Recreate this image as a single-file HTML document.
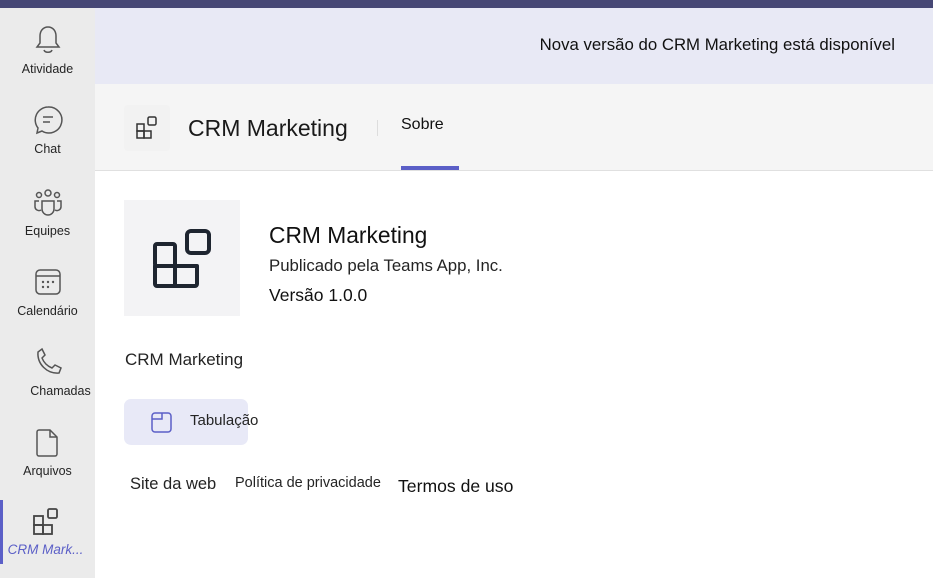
<!DOCTYPE html>
<html><head><meta charset="utf-8"><style>
*{margin:0;padding:0;box-sizing:border-box}
body{width:933px;height:578px;overflow:hidden;background:#fff;font-family:"Liberation Sans",sans-serif;color:#242424;position:relative}
.top{position:absolute;left:0;top:0;width:933px;height:8px;background:#464775}
.side{position:absolute;left:0;top:8px;width:95px;height:570px;background:#ebebeb}
.it{position:absolute;left:0;width:95px;text-align:center;font-size:12.5px;color:#242424}
.it svg{display:block;margin:0 auto 4px}
.banner{position:absolute;left:95px;top:8px;width:838px;height:76px;background:#e8e9f5}
.banner span{position:absolute;right:38px;top:27px;font-size:16.8px;color:#111}
.hdr{position:absolute;left:95px;top:84px;width:838px;height:87px;background:#f5f5f5;border-bottom:1px solid #e0e0e0}
.a{position:absolute;font-size:16px;white-space:nowrap}
</style></head><body>
<div class="top"></div>
<div class="side">
 <div class="it" style="top:16px"><svg width="28" height="34" viewBox="0 0 28 34" fill="none" stroke="#555" stroke-width="1.5"><path d="M14 3c-5 0-8 4-8 9v7l-3 4h22l-3-4v-7c0-5-3-9-8-9z"/><path d="M10 26c1 3 7 3 8 0"/></svg>Atividade</div>
 <div class="it" style="top:96px"><svg width="30" height="34" viewBox="0 0 30 34" fill="none" stroke="#555" stroke-width="1.5"><path d="M15 3a13 13 0 1 1-6 24l-5 2 1-5A13 13 0 0 1 15 3z"/><path d="M10 13h10M10 18h7"/></svg>Chat</div>
 <div class="it" style="top:178px"><svg width="32" height="34" viewBox="0 0 32 34" fill="none" stroke="#555" stroke-width="1.5"><circle cx="16" cy="7" r="3"/><circle cx="7" cy="9" r="2.5"/><circle cx="25" cy="9" r="2.5"/><path d="M10 15h12v8a6 6 0 0 1-12 0z"/><path d="M7 15H3v6a4 4 0 0 0 6 3M25 15h4v6a4 4 0 0 1-6 3"/></svg>Equipes</div>
 <div class="it" style="top:258px"><svg width="30" height="34" viewBox="0 0 30 34" fill="none" stroke="#555" stroke-width="1.5"><rect x="3" y="4" width="24" height="24" rx="4"/><path d="M3 10h24"/><g fill="#555" stroke="none"><circle cx="10" cy="16" r="1.2"/><circle cx="15" cy="16" r="1.2"/><circle cx="20" cy="16" r="1.2"/><circle cx="10" cy="21" r="1.2"/><circle cx="15" cy="21" r="1.2"/></g></svg>Calendário</div>
 <div class="it" style="top:338px"><svg width="30" height="34" viewBox="0 0 30 34" fill="none" stroke="#555" stroke-width="1.5"><path d="M9 3l3 6-3 3c2 5 5 8 10 10l3-3 6 3-2 5c-12 1-22-9-21-21z"/></svg><span style="position:relative;left:13px">Chamadas</span></div>
 <div class="it" style="top:418px"><svg width="28" height="34" viewBox="0 0 28 34" fill="none" stroke="#555" stroke-width="1.5"><path d="M5 4h11l7 7v17a2 2 0 0 1-2 2H5a2 2 0 0 1-2-2V6a2 2 0 0 1 2-2z"/><path d="M16 4v7h7"/></svg>Arquivos</div>
 <div style="position:absolute;left:0;top:492px;width:3px;height:64px;background:#5b5fc7"></div>
 <div class="it" style="top:498px;color:#5b5fc7;font-style:italic;font-size:13.5px;left:-2px"><svg width="30" height="32" viewBox="0 0 30 32" fill="none" stroke="#444" stroke-width="1.8"><rect x="3" y="10" width="9" height="9"/><rect x="3" y="19" width="9" height="9"/><rect x="12" y="19" width="9" height="9"/><rect x="17" y="3" width="9" height="9" rx="1.5"/></svg>CRM Mark...</div>
</div>
<div class="banner"><span>Nova versão do CRM Marketing está disponível</span></div>
<div class="hdr">
 <div style="position:absolute;left:29px;top:21px;width:46px;height:46px;background:#f2f2f2;border-radius:4px"></div>
 <svg style="position:absolute;left:40px;top:31px" width="26" height="26" viewBox="0 0 26 26" fill="none" stroke="#333" stroke-width="1.5"><rect x="2" y="9" width="7" height="7"/><rect x="2" y="16" width="7" height="7"/><rect x="9" y="16" width="7" height="7"/><rect x="13" y="2" width="8" height="8" rx="1.5"/></svg>
 <div class="a" style="left:93px;top:31px;font-size:23px;color:#1a1a1a">CRM Marketing</div>
 <div style="position:absolute;left:282px;top:36px;width:1px;height:16px;background:#ddd"></div>
 <div class="a" style="left:306px;top:32px;font-size:16px;color:#111">Sobre</div>
 <div style="position:absolute;left:306px;top:82px;width:58px;height:4px;background:#5b5fc7"></div>
</div>
<div style="position:absolute;left:124px;top:200px;width:116px;height:116px;background:#f3f3f5"></div>
<svg style="position:absolute;left:150px;top:227px" width="64" height="64" viewBox="0 0 64 64" fill="none" stroke="#1e2530" stroke-width="4" stroke-linejoin="round"><rect x="5" y="17" width="20" height="22" rx="2"/><path d="M5 39h20v20H7a2 2 0 0 1-2-2zM25 39h22v18a2 2 0 0 1-2 2H25z"/><rect x="37" y="4" width="22" height="22" rx="4"/></svg>
<div class="a" style="left:269px;top:222px;font-size:22.8px;color:#111">CRM Marketing</div>
<div class="a" style="left:269px;top:256px;font-size:16.8px">Publicado pela Teams App, Inc.</div>
<div class="a" style="left:269px;top:285px;font-size:17.5px;color:#111">Versão 1.0.0</div>
<div class="a" style="left:125px;top:350px;font-size:17px">CRM Marketing</div>
<div style="position:absolute;left:124px;top:399px;width:124px;height:46px;background:#e8e9f7;border-radius:7px"></div>
<svg style="position:absolute;left:150px;top:411px" width="24" height="24" viewBox="0 0 24 24" fill="none" stroke="#5b5fc7" stroke-width="1.5"><rect x="2" y="2" width="19" height="19" rx="3"/><path d="M2 8h10V2"/></svg>
<div class="a" style="left:190px;top:412px;font-size:15px">Tabulação</div>
<div class="a" style="left:130px;top:475px;font-size:16.5px">Site da web</div>
<div class="a" style="left:235px;top:475px;font-size:14.5px">Política de privacidade</div>
<div class="a" style="left:398px;top:476px;font-size:17.6px;color:#111">Termos de uso</div>
</body></html>
